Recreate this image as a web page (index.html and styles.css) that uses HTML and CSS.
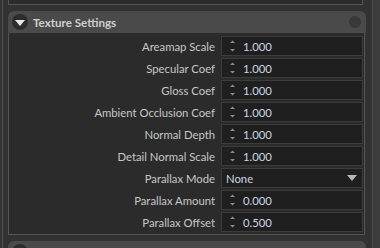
FILE: index.html
```html
<!DOCTYPE html>
<html>
<head>
<meta charset="utf-8">
<link rel="stylesheet" href="styles.css">
</head>
<body>
<div class="window">
  <div class="main">
    <div class="prev-panel"></div>
    <section class="panel">
      <header class="panel-head">
        <span class="toggle">
          <svg width="10" height="6" viewBox="0 0 10 6"><path d="M0 0 H10 L5 6 Z" fill="#e8e8e8"/></svg>
        </span>
        <span class="title">Texture Settings</span>
        <span class="dot"></span>
      </header>
      <div class="panel-body">
        <div class="row"><label>Areamap Scale</label><div class="field spin"><span class="spinner"><svg width="5" height="12" viewBox="0 0 5 12"><path d="M0 3 L2.5 0.5 L5 3 Z" fill="#8a8a8a"/><path d="M0 9 L5 9 L2.5 11.5 Z" fill="#8a8a8a"/></svg></span><span class="val">1.000</span></div></div>
        <div class="row"><label>Specular Coef</label><div class="field spin"><span class="spinner"><svg width="5" height="12" viewBox="0 0 5 12"><path d="M0 3 L2.5 0.5 L5 3 Z" fill="#8a8a8a"/><path d="M0 9 L5 9 L2.5 11.5 Z" fill="#8a8a8a"/></svg></span><span class="val">1.000</span></div></div>
        <div class="row"><label>Gloss Coef</label><div class="field spin"><span class="spinner"><svg width="5" height="12" viewBox="0 0 5 12"><path d="M0 3 L2.5 0.5 L5 3 Z" fill="#8a8a8a"/><path d="M0 9 L5 9 L2.5 11.5 Z" fill="#8a8a8a"/></svg></span><span class="val">1.000</span></div></div>
        <div class="row"><label>Ambient Occlusion Coef</label><div class="field spin"><span class="spinner"><svg width="5" height="12" viewBox="0 0 5 12"><path d="M0 3 L2.5 0.5 L5 3 Z" fill="#8a8a8a"/><path d="M0 9 L5 9 L2.5 11.5 Z" fill="#8a8a8a"/></svg></span><span class="val">1.000</span></div></div>
        <div class="row"><label>Normal Depth</label><div class="field spin"><span class="spinner"><svg width="5" height="12" viewBox="0 0 5 12"><path d="M0 3 L2.5 0.5 L5 3 Z" fill="#8a8a8a"/><path d="M0 9 L5 9 L2.5 11.5 Z" fill="#8a8a8a"/></svg></span><span class="val">1.000</span></div></div>
        <div class="row"><label>Detail Normal Scale</label><div class="field spin"><span class="spinner"><svg width="5" height="12" viewBox="0 0 5 12"><path d="M0 3 L2.5 0.5 L5 3 Z" fill="#8a8a8a"/><path d="M0 9 L5 9 L2.5 11.5 Z" fill="#8a8a8a"/></svg></span><span class="val">1.000</span></div></div>
        <div class="row"><label>Parallax Mode</label><div class="field select"><span class="val">None</span><svg class="caret" width="10" height="6" viewBox="0 0 10 6"><path d="M0 0 H10 L5 6 Z" fill="#b8b8b8"/></svg></div></div>
        <div class="row"><label>Parallax Amount</label><div class="field spin"><span class="spinner"><svg width="5" height="12" viewBox="0 0 5 12"><path d="M0 3 L2.5 0.5 L5 3 Z" fill="#8a8a8a"/><path d="M0 9 L5 9 L2.5 11.5 Z" fill="#8a8a8a"/></svg></span><span class="val">0.000</span></div></div>
        <div class="row"><label>Parallax Offset</label><div class="field spin"><span class="spinner"><svg width="5" height="12" viewBox="0 0 5 12"><path d="M0 3 L2.5 0.5 L5 3 Z" fill="#8a8a8a"/><path d="M0 9 L5 9 L2.5 11.5 Z" fill="#8a8a8a"/></svg></span><span class="val">0.500</span></div></div>
      </div>
    </section>
    <section class="panel next">
      <header class="panel-head">
        <span class="toggle"></span>
      </header>
    </section>
  </div>
  <div class="scroll"></div>
</div>
</body>
</html>
```

FILE: styles.css
```css
html, body {
  margin: 0;
  padding: 0;
  background: #333333;
  width: 380px;
  height: 248px;
  overflow: hidden;
  font-family: "Lato", "Noto Sans", sans-serif;
  font-size: 11.3px;
}
.window {
  display: flex;
  height: 248px;
  overflow: hidden;
}
.main {
  flex: 1;
  border-left: 1px solid #505050;
  margin-left: 2px;
  padding: 0 6px 0 5px;
  display: flex;
  flex-direction: column;
  gap: 6px;
  background: #323232;
  overflow: hidden;
}
.main > * {
  flex-shrink: 0;
}
.scroll {
  width: 7px;
  border-left: 1px solid #4a4a4a;
  background: #3c3c3c;
}
.prev-panel {
  height: 4px;
  margin-right: 3px;
  border: 1px solid #555555;
  border-top: none;
  background: #2b2b2b;
}
.panel {
  display: flex;
  flex-direction: column;
}
.panel-head {
  height: 22px;
  background: #4a4a4a;
  border-radius: 6px 6px 0 0;
  display: flex;
  align-items: center;
  padding: 0 5px 0 4px;
  color: #cfcfcf;
  font-weight: bold;
  font-size: 11.6px;
}
.toggle {
  width: 16px;
  height: 16px;
  border-radius: 50%;
  background: #2c2c2c;
  display: flex;
  align-items: center;
  justify-content: center;
}
.toggle svg { margin-top: 1px; }
.title {
  margin-left: 5px;
  flex: 1;
}
.dot {
  width: 12px;
  height: 12px;
  border-radius: 50%;
  background: #383838;
}
.panel-body {
  background: #2b2b2b;
  border: 1px solid #555555;
  border-top: none;
  margin-right: 1px;
  padding: 3px 1px 2px 0;
  display: flex;
  flex-direction: column;
  gap: 2px;
}
.row {
  display: flex;
  align-items: center;
  height: 20px;
}
.row label {
  width: 206px;
  text-align: right;
  padding-right: 6px;
  color: #c8c8c8;
}
.field {
  flex: 1;
  height: 18px;
  border: 1px solid #3c3c3c;
  background: #1f1f1f;
  display: flex;
  align-items: center;
  color: #cdd6e2;
}
.spinner {
  width: 18px;
  display: flex;
  justify-content: center;
  margin-left: 1px;
}
.spin .val {
  margin-left: 2px;
}
.select .val {
  margin-left: 4px;
  flex: 1;
}
.caret {
  margin-right: 5px;
}
.next .panel-head {
  padding-left: 4px;
}
```
